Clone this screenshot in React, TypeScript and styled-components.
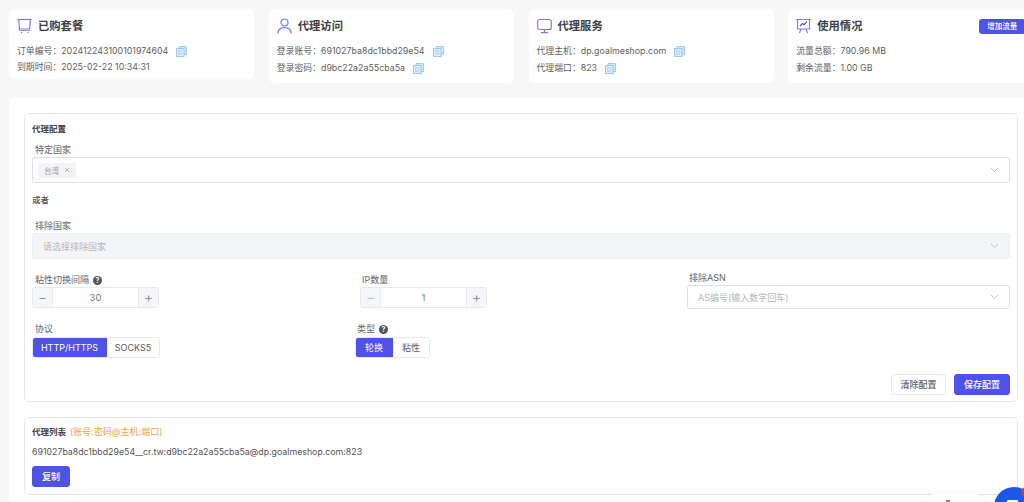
import React from "react";
import styled, { createGlobalStyle } from "styled-components";

const Global = createGlobalStyle`
  html, body { margin: 0; padding: 0; background: #f7f7f7; }
  body { font-family: Inter, "Noto Sans CJK SC", sans-serif; color: #555; }
  * { box-sizing: border-box; }
`;
const Page = styled.div`
  position: relative; width: 1024px; height: 502px; overflow: hidden; background: #f7f7f7;
`;
const Content = styled.div`width: 1034px; padding: 9px 0 0 9px;`;
const Cards = styled.div`display: flex; gap: 14.75px; align-items: flex-start;`;
const Card = styled.section<{ $h: number }>`
  width: 245px; height: ${p => p.$h}px; flex: none; background: #fff; border-radius: 6px; padding: 8px 8px 0;
`;
const CardHead = styled.div`display: flex; align-items: center; gap: 6px; height: 18px;`;
const CardTitle = styled.h3`margin: 0; font-size: 11.3px; line-height: 18px; font-weight: 700; color: #3f3f3f; flex: 1;`;
const CardLines = styled.div<{ $step: number }>`margin-top: 10px; display: flex; flex-direction: column; gap: ${p => p.$step}px;`;
const Line = styled.div`display: flex; align-items: center; height: 12px; font-size: 8.85px; line-height: 12px; color: #5f5f5f; white-space: nowrap;`;
const CopyWrap = styled.span`display: inline-flex; margin-left: 8px;`;
const AddBtn = styled.button`
  width: 46px; height: 15px; margin: 0; border: 0; border-radius: 3px; background: #4f51e8; color: #fff;
  font: 500 7.5px/15px Inter, "Noto Sans CJK SC", sans-serif; text-align: center; padding: 0; flex: none;
`;
const Main = styled.main`
  margin-top: 15px; width: 1024px; height: 420px; background: #fff; border-radius: 6px 0 0 0; padding: 15px 15px 0;
`;
const Panel = styled.section<{ $h: number; $pt: number }>`
  height: ${p => p.$h}px; border: 1px solid #e6e7ea; border-radius: 5px; padding: ${p => p.$pt}px 7px 7px; margin-bottom: 15px;
`;
const PanelTitle = styled.div`font-size: 8.5px; line-height: 16px; font-weight: 600; color: #444; white-space: nowrap;`;
const Hint = styled.span`color: #f5a23a; font-weight: 400; margin-left: 4px; font-size: 9px;`;
const Label = styled.label<{ $indent?: number }>`
  display: flex; align-items: center; gap: 4px; height: 14px; padding-left: ${p => p.$indent ?? 3}px;
  font-size: 9px; line-height: 14px; color: #666; white-space: nowrap;
`;
const SelectBox = styled.div<{ $h: number; $disabled?: boolean }>`
  display: flex; align-items: center; justify-content: space-between; height: ${p => p.$h}px;
  border: 1px solid ${p => (p.$disabled ? "#eceef1" : "#dcdee3")}; border-radius: 3px; background: ${p => (p.$disabled ? "#f4f5f7" : "#fff")};
  padding: 0 10px 0 5px; font-size: 9px; color: #b4b7bd;
`;
const AsnField = styled.div`margin-top: -2px;`;
const Placeholder = styled.span`padding-left: 5px;`;
const Tag = styled.span`
  display: inline-flex; align-items: center; gap: 5px; height: 15px; padding: 0 6px; border-radius: 2px; background: #f2f3f5; color: #9a9da3; font-size: 7.5px; white-space: nowrap;
`;
const Or = styled.div`font-size: 8.5px; line-height: 14px; margin-top: 10px; font-weight: 500; color: #4f4f4f;`;
const Section = styled.div<{ $top: number }>`margin-top: ${p => p.$top}px;`;
const Grid = styled.div<{ $top: number }>`
  display: grid; grid-template-columns: 323px 332px 323px; margin-top: ${p => p.$top}px;
`;
const Stepper = styled.div<{ $ml?: number }>`
  display: flex; width: 127px; height: 21px; margin-left: ${p => p.$ml ?? 0}px; border: 1px solid #e8e9ed; border-radius: 3px; overflow: hidden; background: #fff;
`;
const StepBtn = styled.span<{ $dim?: boolean }>`
  width: 20px; flex: none; display: flex; align-items: center; justify-content: center; background: #f5f6f9; color: ${p => (p.$dim ? "#b8bbc2" : "#8b8e95")};
  font-size: 13px; line-height: 1;
  &:first-child { border-right: 1px solid #e8e9ed; }
  &:last-child { border-left: 1px solid #e8e9ed; }
`;
const StepVal = styled.span`flex: 1; text-align: center; font-size: 9.5px; line-height: 19px; color: #77797f;`;
const Toggle = styled.div`display: flex; width: fit-content; height: 21px; margin-top: 1px; border: 1px solid #e8e9ed; border-radius: 3px; overflow: hidden;`;
const ToggleItem = styled.span<{ $w: number; $on?: boolean }>`
  width: ${p => p.$w}px; display: flex; align-items: center; justify-content: center; margin: ${p => (p.$on ? "-1px 0 -1px -1px" : "0")};
  background: ${p => (p.$on ? "#4f51e8" : "#fff")}; color: ${p => (p.$on ? "#fff" : "#5e5e5e")}; font-size: 9px;
`;
const Actions = styled.div`display: flex; justify-content: flex-end; gap: 8px; margin-top: 16px;`;
const Btn = styled.button<{ $w: number; $primary?: boolean }>`
  display: block; width: ${p => p.$w}px; height: 21px; padding: 0; border-radius: 3px; border: 1px solid ${p => (p.$primary ? "#4f51e8" : "#e8e9ed")};
  background: ${p => (p.$primary ? "#4f51e8" : "#fff")}; color: ${p => (p.$primary ? "#fff" : "#5e5e5e")};
  font: 500 9px/19px Inter, "Noto Sans CJK SC", sans-serif;
`;
const ProxyText = styled.div`font-size: 8.8px; line-height: 14px; margin-top: 5px; margin-bottom: 7px; color: #555;`;
const FloatPill = styled.div`
  position: absolute; left: 924px; top: 493px; width: 62px; height: 30px; background: #fff; border-radius: 14px; box-shadow: 0 0 6px rgba(0,0,0,.05);
`;
const PillDot = styled.div`
  position: absolute; left: 946px; top: 500px; width: 4px; height: 2px; background: #888;
`;
const FloatBall = styled.div`
  position: absolute; left: 994px; top: 487px; width: 40px; height: 40px; border-radius: 50%; background: linear-gradient(135deg, #1a4fe0, #1d6cf0);
`;
const FloatBadge = styled.div`
  position: absolute; left: 1021px; top: 487px; width: 10px; height: 10px; border-radius: 50%; background: #ee2b3b;
`;
const FloatMark = styled.div`
  position: absolute; left: 1007px; top: 500px; width: 11px; height: 6px; background: #fff; border-radius: 1px;
`;
const QMark = styled.span`
  width: 9px; height: 9px; border-radius: 50%; background: #555; color: #fff; font-size: 7px; line-height: 9px; text-align: center; font-weight: 700;
`;

const iconStroke = "#7779f2";
const Ico = styled.svg`flex: none; display: block;`;
const CartIcon = () => (
  <Ico width="15" height="16" viewBox="0 0 15 16" fill="none" stroke={iconStroke} strokeWidth="1.2">
    <path d="M.5 1.500h14" /><path d="M1.800 1.500l.7 9.500h10l1-9.500" />
    <path d="M2.500 11l-.3 1.500h10.800" strokeWidth=".8" />
    <circle cx="4.500" cy="14.500" r=".7" fill={iconStroke} stroke="none" /><circle cx="11" cy="14.500" r=".7" fill={iconStroke} stroke="none" />
  </Ico>
);
const UserIcon = () => (
  <Ico width="15" height="16" viewBox="0 0 15 16" fill="none" stroke={iconStroke} strokeWidth="1.2">
    <circle cx="7.500" cy="4.500" r="3.500" /><path d="M1 15.500c0-3.800 2.500-5.800 6.500-5.800s6.500 2 6.500 5.800" />
  </Ico>
);
const MonitorIcon = () => (
  <Ico width="15" height="16" viewBox="0 0 15 16" fill="none" stroke={iconStroke} strokeWidth="1.2">
    <rect x=".7" y="1.500" width="13.600" height="10" rx="2" /><path d="M7.500 11.500v3M4 14.700h7" />
  </Ico>
);
const BoardIcon = () => (
  <Ico width="15" height="16" viewBox="0 0 15 16" fill="none" stroke={iconStroke} strokeWidth="1.1">
    <path d="M0 1.500h15M1.500 1.500v9.500h12V1.500M5 11l-1.500 4M10 11l1.500 4" />
    <path d="M4 8l2.500-2.500 1.500 1.200 3-3" stroke="#4a4cc8" />
  </Ico>
);
const CopyIcon = () => (
  <Ico width="11" height="11" viewBox="0 0 11 11" fill="none" stroke="#8fc0f6" strokeWidth="1">
    <path d="M3 2.500V.7h7.300v7.800H8.300" fill="#e4f0fd" />
    <rect x=".7" y="2.700" width="7.300" height="7.600" fill="#fff" stroke="#86b9f4" />
    <rect x="2.600" y="4.700" width="3.500" height="3.600" fill="#d5e6fb" strokeWidth=".6" />
  </Ico>
);
const Chevron = () => (
  <Ico width="9" height="6" viewBox="0 0 9 6" fill="none" stroke="#b8bbc2" strokeWidth=".9">
    <path d="M1 1l3.500 3.500L8 1" />
  </Ico>
);
const CloseX = () => (
  <Ico width="6" height="6" viewBox="0 0 6 6" fill="none" stroke="#9a9da3" strokeWidth=".7">
    <path d="M1 1l4 4M5 1L1 5" />
  </Ico>
);

const Value = ({ label, value, copy }: { label: string; value: string; copy?: boolean }) => (
  <Line>
    {label}：{value}
    {copy && <CopyWrap><CopyIcon /></CopyWrap>}
  </Line>
);

export default function App() {
  return (
    <Page>
      <Global />
      <Content>
        <Cards>
          <Card $h={70}>
            <CardHead><CartIcon /><CardTitle>已购套餐</CardTitle></CardHead>
            <CardLines $step={4}>
              <Value label="订单编号" value="202412243100101974604" copy />
              <Value label="到期时间" value="2025-02-22 10:34:31" />
            </CardLines>
          </Card>
          <Card $h={74}>
            <CardHead><UserIcon /><CardTitle>代理访问</CardTitle></CardHead>
            <CardLines $step={5}>
              <Value label="登录账号" value="691027ba8dc1bbd29e54" copy />
              <Value label="登录密码" value="d9bc22a2a55cba5a" copy />
            </CardLines>
          </Card>
          <Card $h={74}>
            <CardHead><MonitorIcon /><CardTitle>代理服务</CardTitle></CardHead>
            <CardLines $step={5}>
              <Value label="代理主机" value="dp.goalmeshop.com" copy />
              <Value label="代理端口" value="823" copy />
            </CardLines>
          </Card>
          <Card $h={74}>
            <CardHead><BoardIcon /><CardTitle>使用情况</CardTitle><AddBtn>增加流量</AddBtn></CardHead>
            <CardLines $step={5}>
              <Value label="流量总额" value="790.96 MB" />
              <Value label="剩余流量" value="1.00 GB" />
            </CardLines>
          </Card>
        </Cards>
        <Main>
          <Panel $h={289} $pt={7}>
            <PanelTitle>代理配置</PanelTitle>
            <Section $top={6}>
              <Label>特定国家</Label>
              <SelectBox $h={26}><Tag>台湾<CloseX /></Tag><Chevron /></SelectBox>
            </Section>
            <Or>或者</Or>
            <Section $top={12}>
              <Label>排除国家</Label>
              <SelectBox $h={26} $disabled><Placeholder>请选择排除国家</Placeholder><Chevron /></SelectBox>
            </Section>
            <Grid $top={14}>
              <div>
                <Label>粘性切换间隔 <QMark>?</QMark></Label>
                <Stepper><StepBtn>−</StepBtn><StepVal>30</StepVal><StepBtn>+</StepBtn></Stepper>
              </div>
              <div>
                <Label $indent={7}>IP数量</Label>
                <Stepper $ml={5}><StepBtn $dim>−</StepBtn><StepVal>1</StepVal><StepBtn>+</StepBtn></Stepper>
              </div>
              <AsnField>
                <Label $indent={2}>排除ASN</Label>
                <SelectBox $h={24}><Placeholder>AS编号(输入数字回车)</Placeholder><Chevron /></SelectBox>
              </AsnField>
            </Grid>
            <Grid $top={13}>
              <div>
                <Label>协议</Label>
                <Toggle><ToggleItem $w={75} $on>HTTP/HTTPS</ToggleItem><ToggleItem $w={52}>SOCKS5</ToggleItem></Toggle>
              </div>
              <div>
                <Label $indent={2}>类型 <QMark>?</QMark></Label>
                <Toggle><ToggleItem $w={38} $on>轮换</ToggleItem><ToggleItem $w={36}>粘性</ToggleItem></Toggle>
              </div>
            </Grid>
            <Actions><Btn $w={55}>清除配置</Btn><Btn $w={56} $primary>保存配置</Btn></Actions>
          </Panel>
          <Panel $h={78} $pt={6}>
            <PanelTitle>代理列表<Hint>(账号:密码@主机:端口)</Hint></PanelTitle>
            <ProxyText>691027ba8dc1bbd29e54__cr.tw:d9bc22a2a55cba5a@dp.goalmeshop.com:823</ProxyText>
            <Btn $w={38} $primary>复制</Btn>
          </Panel>
        </Main>
      </Content>
      <FloatPill />
      <PillDot />
      <FloatBall />
      <FloatMark />
      <FloatBadge />
    </Page>
  );
}
